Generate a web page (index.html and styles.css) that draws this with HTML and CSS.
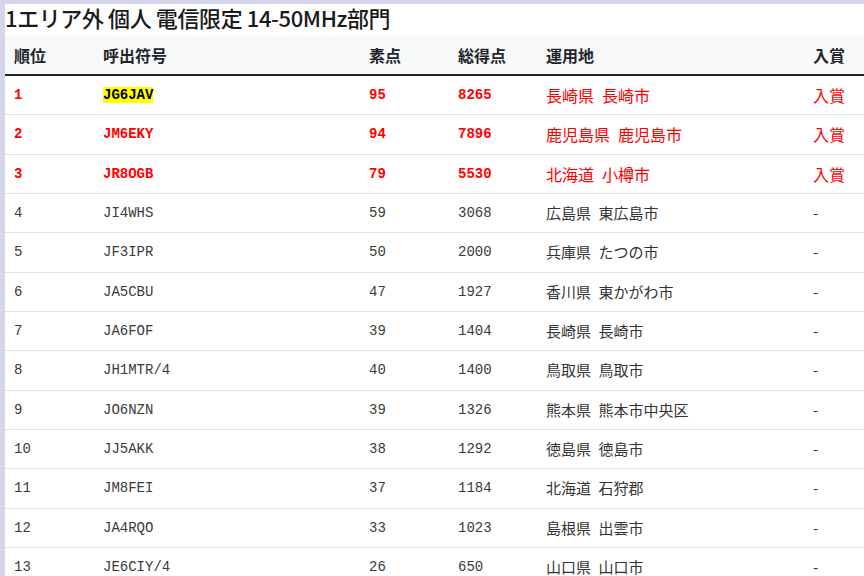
FILE: index.html
```html
<!DOCTYPE html>
<html lang="ja">
<head>
<meta charset="utf-8">
<link rel="stylesheet" href="styles.css">
</head>
<body>
<div class="page">
  <h1 class="title">1エリア外 個人 電信限定 14-50MHz部門</h1>
  <table class="results">
    <colgroup>
      <col class="c-rank"><col class="c-call"><col class="c-pt"><col class="c-total"><col class="c-loc"><col class="c-prize">
    </colgroup>
    <thead>
      <tr><th>順位</th><th>呼出符号</th><th>素点</th><th>総得点</th><th>運用地</th><th>入賞</th></tr>
    </thead>
    <tbody>
      <tr class="win"><td class="mono">1</td><td class="mono"><span class="me">JG6JAV</span></td><td class="mono">95</td><td class="mono">8265</td><td class="jp">長崎県&ensp;長崎市</td><td class="jp">入賞</td></tr>
      <tr class="win"><td class="mono">2</td><td class="mono">JM6EKY</td><td class="mono">94</td><td class="mono">7896</td><td class="jp">鹿児島県&ensp;鹿児島市</td><td class="jp">入賞</td></tr>
      <tr class="win"><td class="mono">3</td><td class="mono">JR8OGB</td><td class="mono">79</td><td class="mono">5530</td><td class="jp">北海道&ensp;小樽市</td><td class="jp">入賞</td></tr>
      <tr><td class="mono">4</td><td class="mono">JI4WHS</td><td class="mono">59</td><td class="mono">3068</td><td class="jp">広島県&ensp;東広島市</td><td class="jp">-</td></tr>
      <tr><td class="mono">5</td><td class="mono">JF3IPR</td><td class="mono">50</td><td class="mono">2000</td><td class="jp">兵庫県&ensp;たつの市</td><td class="jp">-</td></tr>
      <tr><td class="mono">6</td><td class="mono">JA5CBU</td><td class="mono">47</td><td class="mono">1927</td><td class="jp">香川県&ensp;東かがわ市</td><td class="jp">-</td></tr>
      <tr><td class="mono">7</td><td class="mono">JA6FOF</td><td class="mono">39</td><td class="mono">1404</td><td class="jp">長崎県&ensp;長崎市</td><td class="jp">-</td></tr>
      <tr><td class="mono">8</td><td class="mono">JH1MTR/4</td><td class="mono">40</td><td class="mono">1400</td><td class="jp">鳥取県&ensp;鳥取市</td><td class="jp">-</td></tr>
      <tr><td class="mono">9</td><td class="mono">JO6NZN</td><td class="mono">39</td><td class="mono">1326</td><td class="jp">熊本県&ensp;熊本市中央区</td><td class="jp">-</td></tr>
      <tr><td class="mono">10</td><td class="mono">JJ5AKK</td><td class="mono">38</td><td class="mono">1292</td><td class="jp">徳島県&ensp;徳島市</td><td class="jp">-</td></tr>
      <tr><td class="mono">11</td><td class="mono">JM8FEI</td><td class="mono">37</td><td class="mono">1184</td><td class="jp">北海道&ensp;石狩郡</td><td class="jp">-</td></tr>
      <tr><td class="mono">12</td><td class="mono">JA4RQO</td><td class="mono">33</td><td class="mono">1023</td><td class="jp">島根県&ensp;出雲市</td><td class="jp">-</td></tr>
      <tr><td class="mono">13</td><td class="mono">JE6CIY/4</td><td class="mono">26</td><td class="mono">650</td><td class="jp">山口県&ensp;山口市</td><td class="jp">-</td></tr>
    </tbody>
  </table>
</div>
</body>
</html>
```
FILE: styles.css
```css
html, body {
  margin: 0;
  padding: 0;
  background: #fff;
}
body {
  font-family: "Noto Sans CJK JP", "Noto Sans", sans-serif;
  color: #333;
  overflow: hidden;
}
.page {
  border-top: 4px solid #d6d6ea;
  border-left: 5px solid #d6d6ea;
  min-height: 600px;
}
.title {
  margin: 0;
  font-size: 22px;
  font-weight: 500;
  line-height: 26px;
  height: 32px;
  color: #1a1a1a;
  letter-spacing: -0.4px;
}
.results {
  border-collapse: collapse;
  table-layout: fixed;
  width: 859px;
}
.c-rank { width: 89px; }
.c-call { width: 266px; }
.c-pt { width: 89px; }
.c-total { width: 88px; }
.c-loc { width: 267px; }
.c-prize { width: 60px; }
.results thead tr {
  background: #f8f9fa;
  border-bottom: 2px solid #212529;
}
.results th {
  text-align: left;
  font-weight: 700;
  font-size: 16px;
  line-height: 22px;
  padding: 8px 9px;
  color: #212529;
}
.results td {
  padding: 8px 9px;
  line-height: 22.33px;
  font-size: 15px;
  border-bottom: 1px solid #dee2e6;
  white-space: nowrap;
  color: #333;
}
.results td.mono {
  font-family: "Liberation Mono", "DejaVu Sans Mono", monospace;
  font-size: 14px;
  color: #3a3a3a;
}
.results td.jp {
  font-size: 15px;
}
.results tr.win td,
.results tr.win td.mono {
  color: #ff0000;
}
.results tr.win td.jp {
  font-size: 16px;
}
.results tr.win td.mono {
  font-weight: 700;
}
.me {
  background: #ffff00;
  color: #000;
  font-weight: 700;
}
```
